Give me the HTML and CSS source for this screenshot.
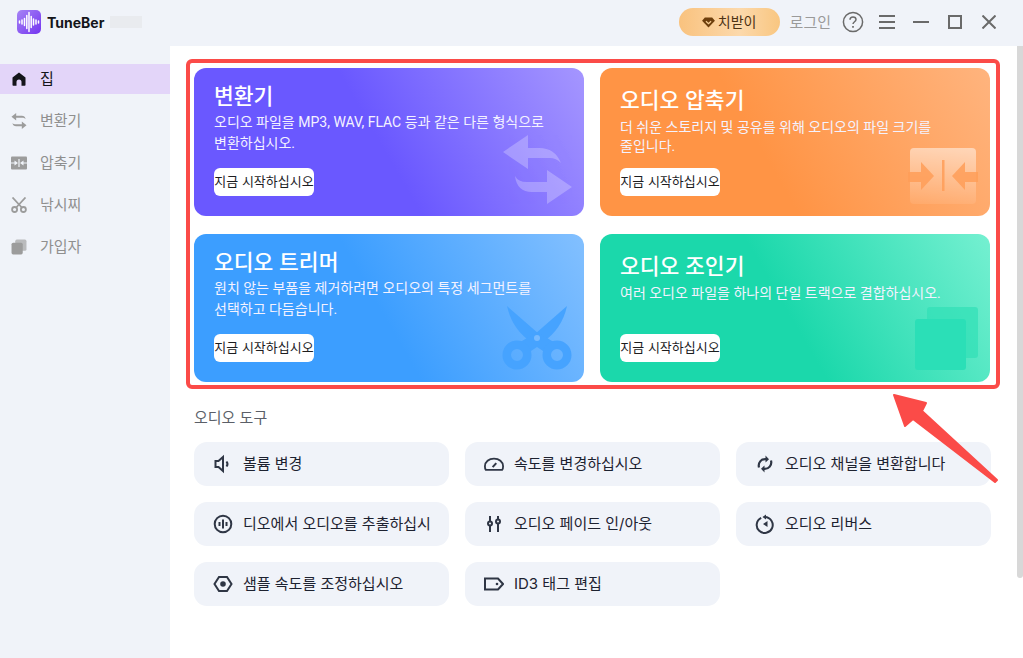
FILE: index.html
```html
<!DOCTYPE html>
<html lang="ko">
<head>
    <meta charset="UTF-8">
    <title>TuneBer</title>
    <link rel="stylesheet" href="styles.css">
</head>
<body>
<header class="topbar">
    <div class="brand">
        <svg class="logo" viewBox="0 0 24 24">
            <defs>
                <linearGradient id="logoFill" x1="0" y1="0" x2="1" y2="1">
                    <stop offset="0" stop-color="#a684f5"/>
                    <stop offset="1" stop-color="#7434f0"/>
                </linearGradient>
            </defs>
            <rect width="24" height="24" rx="5" fill="url(#logoFill)"/>
            <path d="M2.5 11v2M5 10v4M7.5 8.5v7M9.8 5.5v13M12 2.5v19M14.2 6.5v11M16.5 9v6M19 10v4M21.5 11v2" stroke="#fff" stroke-width="1.5" stroke-linecap="round" fill="none"/>
        </svg>
        <b class="brand-name">TuneBer</b>
        <span class="brand-blur"></span>
    </div>
    <div class="actions">
        <button class="tip">
            <svg class="tip-icon" viewBox="0 0 14 12">
                <path d="M3 0.5h8l3 3.5-7 7.5-7-7.5z" fill="#6e3f0d"/>
                <path d="M4.2 4.6 7 7.2l2.8-2.6" stroke="#f8cf96" stroke-width="1.4" fill="none"/>
            </svg>
            치받이
        </button>
        <span class="login">로그인</span>
        <svg class="win-btn help" viewBox="0 0 22 22" fill="none" stroke="#6a6a6a">
            <circle cx="11" cy="11" r="9.6" stroke-width="1.5"/>
            <path d="M8 8.8c0-1.8 1.3-2.9 3-2.9s3 1.1 3 2.6c0 2.2-3 2.3-3 4.6" stroke-width="1.5"/>
            <path d="M11 15v1.8" stroke-width="1.7"/>
        </svg>
        <svg class="win-btn menu" viewBox="0 0 16 14" stroke="#6a6a6a" stroke-width="2">
            <path d="M0 1h16M0 7h16M0 13h16"/>
        </svg>
        <svg class="win-btn min" viewBox="0 0 16 14" stroke="#6a6a6a" stroke-width="2">
            <path d="M0 7h16"/>
        </svg>
        <svg class="win-btn max" viewBox="0 0 14 14" fill="none" stroke="#6a6a6a" stroke-width="2">
            <rect x="1" y="1" width="12" height="12"/>
        </svg>
        <svg class="win-btn close" viewBox="0 0 14 14" stroke="#6a6a6a" stroke-width="2">
            <path d="M0.5 0.5l13 13M13.5 0.5l-13 13"/>
        </svg>
    </div>
</header>

<div class="layout">
    <nav class="sidebar">
        <a class="nav-item active">
            <svg viewBox="0 0 16 16"><path d="M8 1.5 1.5 6.5V14a.8.8 0 0 0 .8.8h3.2V11a2.5 2.5 0 0 1 5 0v3.8h3.2a.8.8 0 0 0 .8-.8V6.5z" fill="#14151a"/></svg>
            집
        </a>
        <a class="nav-item">
            <svg viewBox="0 0 16 17" fill="#9c9c9c"><path d="M5 0v3h6c2.2 0 3.500 1 4 3.500C14 5.400 13 5 11 5H5v3L0 4zM11 17v-3H5c-2.200 0-3.500-1-4-3.500C2 11.600 3 12 5 12h6V9l5 4z"/></svg>
            변환기
        </a>
        <a class="nav-item">
            <svg viewBox="0 0 16 14"><rect y="0.5" width="16" height="13" rx="1" fill="#9c9c9c"/><path d="M0 7h4M16 7h-4M8 3v8" stroke="#f0f3f9" stroke-width="1.2"/><path d="M3.5 4.5 7 7 3.5 9.5zM12.5 4.5 9 7l3.5 2.500z" fill="#f0f3f9"/></svg>
            압축기
        </a>
        <a class="nav-item">
            <svg viewBox="0 0 16 16" fill="none" stroke="#9c9c9c" stroke-width="1.8"><path d="M1.5 0.5 10.8 10.5M14.5 0.5 5.2 10.5"/><circle cx="3.6" cy="12.5" r="2.5"/><circle cx="12.4" cy="12.5" r="2.5"/></svg>
            낚시찌
        </a>
        <a class="nav-item">
            <svg viewBox="0 0 15 15" fill="#9c9c9c"><rect x="4" y="0.5" width="10.5" height="10.5" rx="1.5" opacity=".65"/><rect x="0.5" y="3.5" width="10.5" height="11" rx="1.5"/></svg>
            가입자
        </a>
    </nav>

    <main class="main">
        <div class="content">
            <section class="cards">
                <article class="card card-purple">
                    <h3>변환기</h3>
                    <p>오디오 파일을 MP3, WAV, FLAC 등과 같은 다른 형식으로 변환하십시오.</p>
                    <button class="start">지금 시작하십시오</button>
                    <svg class="decor decor-swap" viewBox="0 0 70 70" fill="#fff" opacity=".25">
                        <path d="M25 0 0 17l25 17V23h22q6 0 11 5Q52 13 36 13H25z"/>
                        <path d="M44 35l25 17-25 17V57H29Q14 57 12 41q3 6 12 6h20z"/>
                    </svg>
                </article>
                <article class="card card-orange card-compact">
                    <h3>오디오 압축기</h3>
                    <p>더 쉬운 스토리지 및 공유를 위해 오디오의 파일 크기를 줄입니다.</p>
                    <button class="start">지금 시작하십시오</button>
                    <svg class="decor decor-compress" viewBox="0 0 70 56">
                        <defs>
                            <linearGradient id="squareFill" x1="0" y1="0" x2="0" y2="1">
                                <stop offset="0" stop-color="#fff" stop-opacity=".5"/>
                                <stop offset="1" stop-color="#fff" stop-opacity=".08"/>
                            </linearGradient>
                        </defs>
                        <rect x="2" width="66" height="56" rx="4" fill="url(#squareFill)"/>
                        <path d="M0 24h13V14l13 14-13 14V34H0zM70 24H57V14L44 28l13 14V34h13z" fill="#ff9d58" opacity=".85"/>
                        <rect x="34" y="12" width="2.5" height="31" fill="#ff9d58" opacity=".85"/>
                    </svg>
                </article>
                <article class="card card-blue">
                    <h3>오디오 트리머</h3>
                    <p>원치 않는 부품을 제거하려면 오디오의 특정 세그먼트를 선택하고 다듬습니다.</p>
                    <button class="start">지금 시작하십시오</button>
                    <svg class="decor decor-scissors" viewBox="0 0 70 68" fill="none" stroke="#46a3ff">
                        <path d="M5 2 37 30l-8 8Q10 25 5 2z" fill="#46a3ff" stroke="none"/>
                        <path d="M65 2 33 30l8 8Q60 25 65 2z" fill="#46a3ff" stroke="none"/>
                        <path d="M15 40 35 28l20 12-8 11-12-8-12 8z" fill="#46a3ff" stroke="none"/>
                        <circle cx="15" cy="51" r="10.25" stroke-width="8.5"/>
                        <circle cx="55" cy="51" r="10.25" stroke-width="8.5"/>
                        <circle cx="35" cy="34" r="3" fill="#78baff" stroke="none"/>
                    </svg>
                </article>
                <article class="card card-green card-compact">
                    <h3>오디오 조인기</h3>
                    <p>여러 오디오 파일을 하나의 단일 트랙으로 결합하십시오.</p>
                    <button class="start">지금 시작하십시오</button>
                    <svg class="decor decor-layers" viewBox="0 0 63 63">
                        <rect x="12" width="51" height="51" rx="3" fill="#30dfb6" opacity=".7"/>
                        <rect y="12" width="51" height="51" rx="3" fill="#2bdfb7"/>
                    </svg>
                </article>
            </section>

            <h4 class="tools-title">오디오 도구</h4>
            <section class="tools">
                <div class="tool">
                    <svg viewBox="0 0 20 20"><path d="M10 3v14L5.5 13H2.5V7h3zM13.500 7.500c1.200 1.500 1.200 3.500 0 5"/></svg>
                    볼륨 변경
                </div>
                <div class="tool">
                    <svg viewBox="0 0 22 20"><path d="M2 16.500h18c1-1 1-2.500 1-4C21 7.500 16.500 4 11 4S1 7.500 1 12.500c0 1.500.2 3 1 4z"/><path d="M9.500 13.500 13.500 9" stroke-width="2.2"/></svg>
                    속도를 변경하십시오
                </div>
                <div class="tool">
                    <svg viewBox="0 0 20 20"><path d="M4 13.500C2.800 9 6 4.500 11.500 5.200M16 6.500c1.200 4.500-2 9-7.500 8.300" stroke-width="2.2"/><path d="M10.500 1.500 14 5.300 10.500 8.500zM9.500 11.500 6 14.700l3.500 3.800z" fill="#2f3645" stroke="none"/></svg>
                    오디오 채널을 변환합니다
                </div>
                <div class="tool">
                    <svg viewBox="0 0 20 20"><circle cx="10" cy="10" r="8.3"/><path d="M6.5 8v4M10 5.5v9M13.5 8v4"/></svg>
                    디오에서 오디오를 추출하십시
                </div>
                <div class="tool">
                    <svg viewBox="0 0 20 20"><path d="M6 2v5M6 12v6M14 2v3M14 10v8"/><circle cx="6" cy="9.5" r="2"/><circle cx="14" cy="7.5" r="2"/></svg>
                    오디오 페이드 인/아웃
                </div>
                <div class="tool">
                    <svg viewBox="0 0 20 20"><path d="M6.2 3.800A8 8 0 1 0 10 3"/><path d="M11 0.5 7.5 3 11 5.5zM12.5 7v6L8 10z" fill="#2f3645" stroke="none"/></svg>
                    오디오 리버스
                </div>
                <div class="tool">
                    <svg viewBox="0 0 20 20"><path d="M6 3h8l4.5 7-4.500 7H6l-4.500-7z"/><circle cx="10" cy="10" r="1.8" fill="#2f3645"/></svg>
                    샘플 속도를 조정하십시오
                </div>
                <div class="tool">
                    <svg viewBox="0 0 20 20"><path d="M1 4.5h13l5 5.500-5 5.500H1z"/><circle cx="13" cy="10" r="1.3" fill="#2f3645" stroke="none"/></svg>
                    ID3 태그 편집
                </div>
            </section>
        </div>
        <div class="scrollbar"></div>
    </main>
</div>

<!-- annotation drawn on top of the screenshot -->
<div class="mark-frame"></div>
<svg class="mark-arrow" viewBox="0 0 110 94">
    <path d="M3 3 35 11 31 19 106 88 104 90 22 27 14 34z" fill="#fb4b48" stroke="#fb4b48" stroke-width="2" stroke-linejoin="round"/>
</svg>
</body>
</html>
```

FILE: styles.css
```css
* {
    box-sizing: border-box;
}

html, body {
    height: 100%;
}

body {
    margin: 0;
    overflow: hidden;
    background: #f0f3f9;
    font-family: Inter, "Noto Sans CJK KR", sans-serif;
    color: #1d2230;
}

.topbar {
    height: 46px;
    display: flex;
    align-items: center;
    justify-content: space-between;
    padding: 0 27px 2px 17px;
}

.brand {
    display: flex;
    align-items: center;
}

.logo {
    width: 24px;
    height: 24px;
}

.brand-name {
    margin-left: 6px;
    font-size: 14px;
    font-weight: 700;
    color: #14151a;
}

.brand-blur {
    width: 32px;
    height: 12px;
    margin-left: 6px;
    background: #e9ebef;
}

.actions {
    display: flex;
    align-items: center;
}

.tip {
    width: 101px;
    height: 28px;
    display: flex;
    align-items: center;
    justify-content: center;
    gap: 3px;
    border: 0;
    padding: 0 0 2px;
    border-radius: 14px;
    background: linear-gradient(90deg, #f9c27e, #fcd9ac 60%, #f9c680);
    font-family: inherit;
    font-size: 14px;
    color: #4d3213;
}

.tip-icon {
    width: 13px;
    height: 11px;
    margin-top: 2px;
}

.login {
    margin-left: 10px;
    padding-bottom: 2px;
    font-size: 15px;
    color: #9a9a9a;
}

.win-btn {
    display: block;
}

.help {
    width: 22px;
    height: 22px;
    margin-left: 11px;
}

.menu {
    width: 16px;
    height: 14px;
    margin-left: 15px;
}

.min {
    width: 16px;
    height: 14px;
    margin-left: 18px;
}

.max {
    width: 14px;
    height: 14px;
    margin-left: 19px;
}

.close {
    width: 14px;
    height: 14px;
    margin-left: 20px;
}

.layout {
    display: flex;
    height: calc(100% - 46px);
}

.sidebar {
    width: 170px;
    flex: none;
    padding-top: 18px;
    display: flex;
    flex-direction: column;
    gap: 12px;
}

.nav-item {
    height: 30px;
    display: flex;
    align-items: center;
    gap: 13px;
    padding: 0 0 4px 11px;
    font-size: 15px;
    color: #8f8f8f;
}

.nav-item svg {
    width: 16px;
    height: 16px;
    margin-top: 4px;
}

.nav-item.active {
    background: #e3d5f9;
    color: #14151a;
}

.main {
    flex: 1;
    display: flex;
    background: #fff;
}

.content {
    flex: 1;
    padding: 22px 0 0 24px;
}

.scrollbar {
    width: 6px;
    height: 532px;
    background: #d8d8d8;
    border-radius: 0 0 3px 3px;
}

.cards {
    display: grid;
    grid-template-columns: 390px 390px;
    grid-auto-rows: 148px;
    gap: 18px 16px;
}

.card {
    position: relative;
    overflow: hidden;
    display: flex;
    flex-direction: column;
    align-items: flex-start;
    padding: 14px 20px 20px;
    border-radius: 12px;
    color: #fff;
}

.card h3 {
    margin: 0;
    font-size: 21.5px;
    line-height: 28px;
    font-weight: 500;
}

.card p {
    position: relative;
    z-index: 1;
    margin: 2px 0 0;
    font-family: Roboto, "Noto Sans CJK KR", sans-serif;
    font-size: 14px;
    line-height: 21px;
    word-break: keep-all;
    color: #f4f2ff;
}

.card-compact {
    padding-top: 18px;
}

.card-compact p {
    line-height: 19px;
    margin-top: 4px;
}

.card-purple {
    background: linear-gradient(60deg, #6a58ff 48%, #a596ff 100%);
}

.card-orange {
    background: linear-gradient(60deg, #ff9445 42%, #ffb47e 100%);
}

.card-blue {
    background: linear-gradient(60deg, #3c9eff 48%, #83c0ff 100%);
}

.card-green {
    background: linear-gradient(60deg, #1bd8ab 48%, #75f0d1 100%);
}

.start {
    position: relative;
    z-index: 1;
    margin-top: auto;
    width: 100px;
    height: 28px;
    padding: 0 0 3px;
    border: 0;
    border-radius: 6px;
    background: #fff;
    font-family: inherit;
    font-size: 13px;
    white-space: nowrap;
    color: #1d1d1f;
}

.decor {
    position: absolute;
}

.decor-swap {
    right: 11px;
    bottom: 11px;
    width: 70px;
    height: 70px;
}

.decor-compress {
    right: 12px;
    bottom: 12px;
    width: 70px;
    height: 56px;
}

.decor-scissors {
    right: 12px;
    bottom: 10px;
    width: 70px;
    height: 68px;
}

.decor-layers {
    right: 12px;
    bottom: 12px;
    width: 63px;
    height: 63px;
}

.tools-title {
    margin: 27px 0 15px;
    font-size: 15px;
    line-height: 18px;
    font-weight: 400;
    color: #5b5f68;
}

.tools {
    display: grid;
    grid-template-columns: repeat(3, 255px);
    grid-auto-rows: 44px;
    gap: 16px;
}

.tool {
    display: flex;
    align-items: center;
    gap: 10px;
    padding: 0 0 4px 19px;
    border-radius: 13px;
    background: #f0f3f9;
    font-size: 15px;
    white-space: nowrap;
    color: #1d2230;
}

.tool svg {
    flex: none;
    width: 20px;
    height: 20px;
    margin-top: 4px;
    fill: none;
    stroke: #2f3645;
    stroke-width: 2;
}

.mark-frame {
    position: absolute;
    left: 186px;
    top: 59px;
    width: 814px;
    height: 330px;
    border: 4px solid #fb4b48;
    border-radius: 6px;
}

.mark-arrow {
    position: absolute;
    left: 891px;
    top: 392px;
    width: 110px;
    height: 94px;
}
```
